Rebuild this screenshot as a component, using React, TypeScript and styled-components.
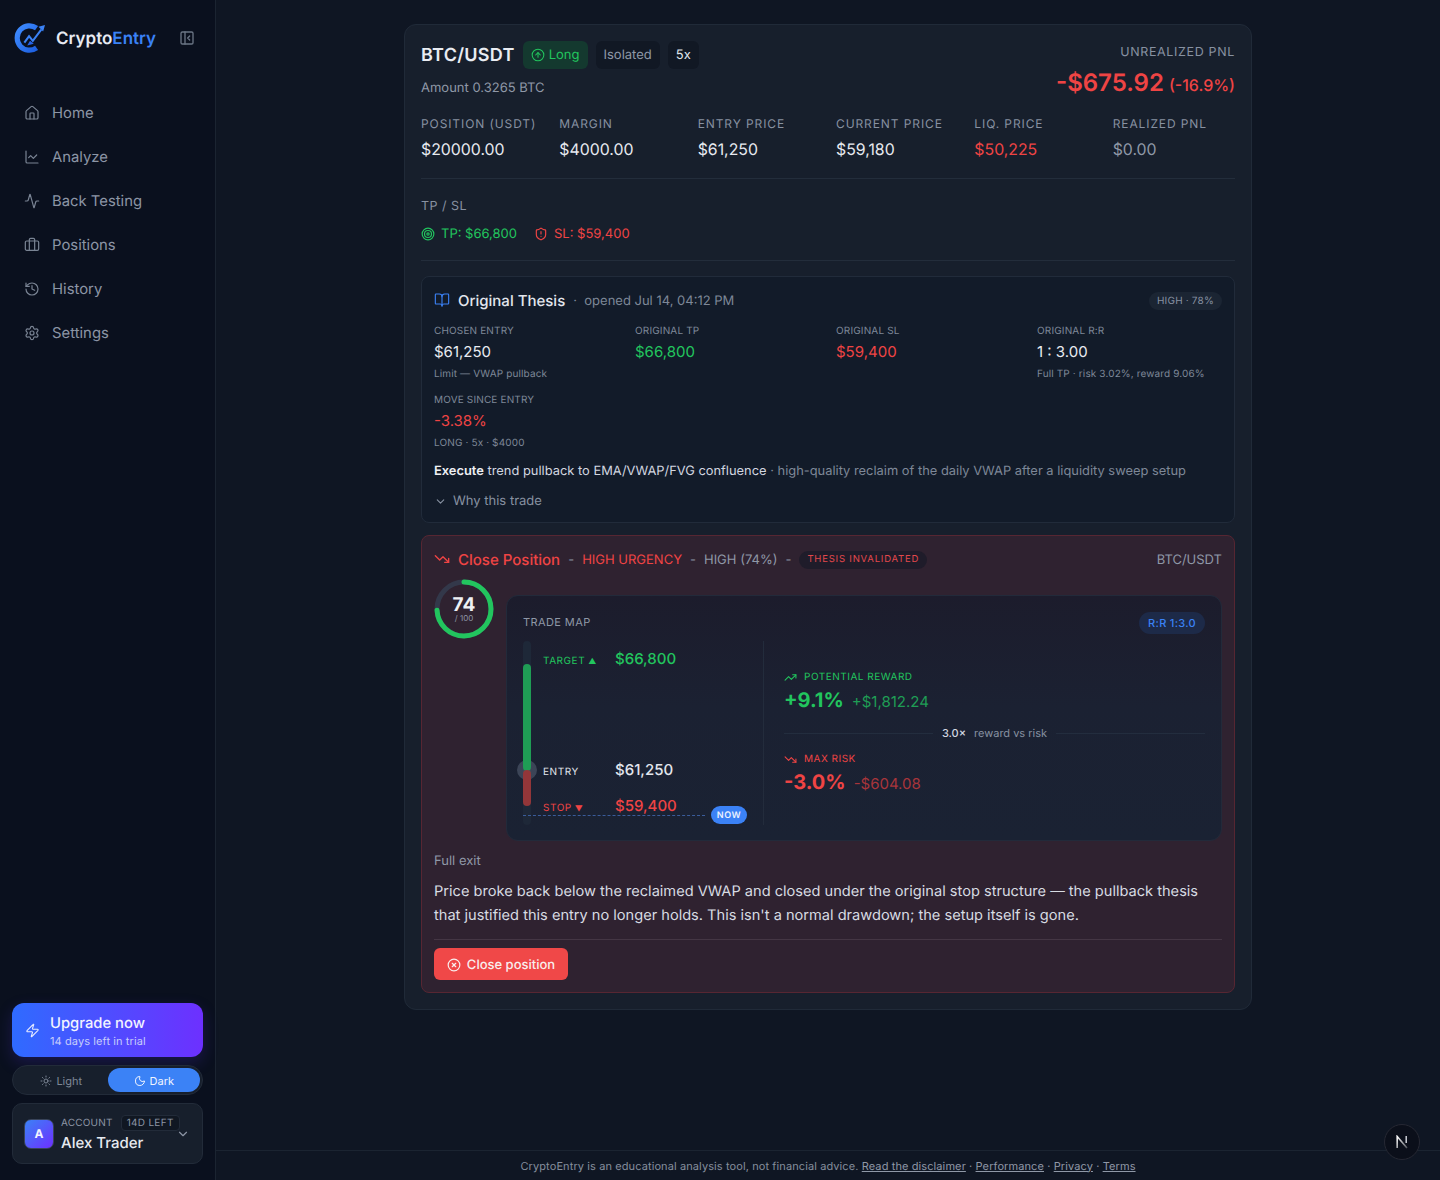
import React from 'react';
import styled, { createGlobalStyle } from 'styled-components';
import {
  House, ChartLine, Activity, Briefcase, History, Settings, PanelLeftClose,
  TrendingDown, TrendingUp, CircleArrowUp, Target, ShieldAlert, BookOpen, ChevronDown,
  Zap, Sun, Moon, CircleX,
} from 'lucide-react';

const Global = createGlobalStyle`
  * { box-sizing: border-box; }
  html, body { margin: 0; height: 1180px; overflow: hidden; background: #0f1623; }
  body { font-family: Inter, "Liberation Sans", sans-serif; color: #e7eaf0; text-rendering: geometricPrecision; }
`;

const Shell = styled.div`display: flex; width: 1440px; height: 1180px;`;

const Sidebar = styled.aside`
  width: 216px; height: 1180px; flex: none; display: flex; flex-direction: column;
  background: #0a101e; border-right: 1px solid #1b2431; padding: 0 12px 16px;
`;
const Brand = styled.div`display: flex; align-items: center; height: 76px; padding-left: 2px;`;
const BrandName = styled.span`
  margin-left: 10px; padding-top: 1px; font-size: 17px; font-weight: 600; color: #e7eaf2;
  b { font-weight: 600; color: #3b82f6; }
`;
const Collapse = styled.span`margin-left: auto; margin-right: 8px; display: flex; color: #6b7585;`;
const Nav = styled.nav`display: flex; flex-direction: column; margin-top: 15px;`;
const NavItem = styled.div`
  height: 44px; display: flex; align-items: center; gap: 12px; padding-left: 12px;
  font-size: 14.85px; color: #8c95a5; svg { color: #7a8494; }
`;
const Spacer = styled.div`flex: 1;`;
const Upgrade = styled.div`
  height: 54px; border-radius: 12px; background: linear-gradient(90deg, #2f6bff, #6d30ff);
  display: flex; align-items: center; gap: 10px; padding-left: 13px; color: #e8ecff;
  box-shadow: 0 6px 16px rgba(88, 50, 230, .22);
`;
const UpgradeText = styled.div`display: flex; flex-direction: column;`;
const UpgradeTitle = styled.span`font-size: 14.8px; font-weight: 500; line-height: 20px; padding-top: 1px; color: #f1f3ff;`;
const UpgradeSub = styled.span`font-size: 11px; line-height: 16px; letter-spacing: .1px; color: #c6cdfb;`;
const Toggle = styled.div`
  margin-top: 8px; height: 30px; border-radius: 15px; background: #171f2c; border: 1px solid #222b39;
  display: grid; grid-template-columns: 1fr 1fr; padding: 2px;
`;
const ToggleOpt = styled.div<{ $on?: boolean }>`
  display: flex; align-items: center; justify-content: center; gap: 4px; font-size: 11px;
  border-radius: 13px; padding-top: 1px; background: ${p => (p.$on ? '#3b82f6' : 'transparent')};
  color: ${p => (p.$on ? '#f0f5ff' : '#7d8796')};
`;
const Account = styled.div`
  margin-top: 8px; height: 61px; border-radius: 10px; background: #171f2c; border: 1px solid #222b39;
  display: flex; align-items: center; padding: 0 12px 0 11px; gap: 7px;
`;
const Avatar = styled.div`
  width: 30px; height: 30px; flex: none; border-radius: 7px; background: linear-gradient(135deg, #3b82f6, #6d30ff);
  border: 1px solid #39445a; display: flex; align-items: center; justify-content: center;
  font-size: 12px; font-weight: 700; color: #f2f4ff;
`;
const AccountBody = styled.div`flex: 1; min-width: 0; display: flex; flex-direction: column; gap: 2px;`;
const AccountTop = styled.div`display: flex; align-items: center; gap: 8px;`;
const AccountLabel = styled.span`font-size: 10px; letter-spacing: .2px; color: #8c95a5; white-space: nowrap;`;
const AccountTag = styled.span`
  flex: none; font-size: 10px; letter-spacing: .3px; color: #8c95a5; padding: 0 5px; line-height: 14px; white-space: nowrap;
  background: #101722; border: 1px solid #222b39; border-radius: 4px;
`;
const AccountName = styled.span`font-size: 15px; font-weight: 500; line-height: 20px; color: #e7eaf0;`;
const AccountChevron = styled.span`flex: none; display: flex; color: #8c95a5; margin-left: -1px;`;

const Main = styled.main`flex: 1; min-width: 0; display: flex; flex-direction: column; position: relative;`;
const Content = styled.div`flex: 1; padding-top: 24px; display: flex; justify-content: center;`;
const Footer = styled.footer`
  height: 30px; border-top: 1px solid #1b2431; display: flex; align-items: center; justify-content: center;
  font-size: 11px; color: #858e9d; letter-spacing: .1px; white-space: pre;
  a { color: #8f98a7; text-decoration: underline; }
`;
const DevBadge = styled.div`
  position: absolute; right: 20px; bottom: 20px; width: 36px; height: 36px; border-radius: 50%;
  background: #0b0f1a; border: 1px solid #262833; display: flex; align-items: center; justify-content: center;
`;

const Card = styled.section`
  width: 848px; height: 986px; background: #171f2c; border: 1px solid #202a38; border-radius: 12px;
  padding: 16px;
`;
const Head = styled.div`display: flex; justify-content: space-between; height: 59px;`;
const HeadLeft = styled.div`display: flex; flex-direction: column;`;
const TitleRow = styled.div`display: flex; align-items: center; gap: 8px; height: 28px;`;
const Pair = styled.h1`margin: 0; font-size: 18px; font-weight: 600; letter-spacing: .27px; color: #e9ecf2;`;
const Badge = styled.span<{ $tone?: 'long' | 'muted' | 'plain' }>`
  height: 28px; display: inline-flex; align-items: center; gap: 4px; padding: 0 8px; border-radius: 6px;
  font-size: 13px;
  background: ${p => (p.$tone === 'long' ? '#14392f' : '#111824')};
  color: ${p => (p.$tone === 'long' ? '#22c55e' : p.$tone === 'plain' ? '#dfe3ea' : '#8f98a7')};
`;
const Amount = styled.div`margin-top: 10px; font-size: 13px; line-height: 18px; color: #8f98a7;`;
const HeadRight = styled.div`text-align: right;`;
const PnlLabel = styled.div`font-size: 12.5px; letter-spacing: .65px; line-height: 20px; color: #8791a1; margin-top: 2px;`;
const Pnl = styled.div`
  margin-top: 4px; font-size: 24px; line-height: 32px; font-weight: 600; color: #ef4444;
  span { font-size: 16px; font-weight: 500; margin-left: 5px; }
`;
const Stats = styled.div`
  margin-top: 15px; display: grid; grid-template-columns: repeat(6, 1fr); gap: 16px;
  padding-bottom: 16px; border-bottom: 1px solid #232d3b;
`;
const StatLabel = styled.div`font-size: 12px; letter-spacing: .9px; line-height: 18px; color: #8791a1; white-space: nowrap;`;
const StatValue = styled.div<{ $c?: string }>`margin-top: 5px; font-size: 15.85px; line-height: 24px; color: ${p => p.$c || '#e7eaf0'};`;
const TpSl = styled.div`padding: 18px 0 0; border-bottom: 1px solid #232d3b; height: 82px;`;
const TpLabel = styled.div`font-size: 12.5px; letter-spacing: .5px; line-height: 20px; color: #8791a1;`;
const TpRow = styled.div`margin-top: 7px; display: flex; gap: 17px; height: 20px;`;
const TpItem = styled.span<{ $c: string }>`display: inline-flex; align-items: center; gap: 6px; font-size: 13px; color: ${p => p.$c};`;

const Thesis = styled.div`
  margin-top: 15px; height: 247px; border: 1px solid #212b3a; border-radius: 8px; background: #121b29; padding: 12px;
`;
const ThesisHead = styled.div`display: flex; align-items: center; height: 22px; margin-bottom: 12px;`;
const ThesisTitle = styled.span`margin-left: 8px; font-size: 15px; font-weight: 500; color: #e2e6ed;`;
const ThesisMeta = styled.span`margin-left: 8px; padding-top: 2px; font-size: 13px; color: #7e8898; white-space: pre;`;
const Conf = styled.span`
  margin-left: auto; margin-top: 2px; font-size: 10px; line-height: 18px; padding: 0 8px; border-radius: 9px;
  background: #1b2533; color: #8791a1; letter-spacing: .2px;
`;
const ThesisGrid = styled.div`display: grid; grid-template-columns: repeat(4, 1fr); column-gap: 16px; row-gap: 10px;`;
const TLabel = styled.div`font-size: 10px; letter-spacing: .15px; line-height: 16px; color: #7e8898;`;
const TValue = styled.div<{ $c?: string }>`margin-top: 2px; font-size: 15px; line-height: 22px; color: ${p => p.$c || '#e7eaf0'};`;
const TSub = styled.div`margin-top: 3px; font-size: 10px; line-height: 16px; color: #7e8898; letter-spacing: .13px;`;
const ThesisCopy = styled.p`
  margin: 11px 0 0; font-size: 12.88px; line-height: 20px; color: #d2d7e0;
  b { font-weight: 600; color: #eef0f4; }
  span { color: #7e8898; }
`;
const Why = styled.div`margin-top: 9px; display: flex; align-items: center; gap: 6px; font-size: 13px; line-height: 20px; color: #8791a1;`;

const Close = styled.div`
  margin-top: 12px; height: 458px; border: 1px solid #572632; border-radius: 8px; background: #2f2230; padding: 12px;
`;
const CloseHead = styled.div`display: flex; align-items: center; height: 22px; font-size: 13px; white-space: nowrap;`;
const CloseTitle = styled.span`margin-left: 8px; font-size: 15px; font-weight: 500; color: #ef4444;`;
const Dash = styled.span`margin: 0 8px; padding-top: 2px; color: #8791a1;`;
const Urgency = styled.span`padding-top: 2px; color: #ef4444;`;
const Muted = styled.span`padding-top: 2px; color: #8f98a7;`;
const Invalid = styled.span`
  margin-top: 2px; font-size: 9.5px; letter-spacing: .8px; line-height: 18px; padding: 0 8px; border-radius: 9px;
  background: #1f1c2a; color: #e2484c;
`;
const CloseAsset = styled.span`margin-left: auto; padding-top: 2px; color: #8f98a7;`;
const CloseBody = styled.div`display: flex; gap: 12px; margin-top: 9px; height: 272px;`;
const Ring = styled.div`position: relative; width: 60px; height: 60px; flex: none;`;
const RingText = styled.div`
  position: absolute; inset: 0; display: flex; flex-direction: column; align-items: center; justify-content: center;
`;
const RingNum = styled.span`font-size: 19px; line-height: 16px; margin-top: 2px; font-weight: 700; color: #eef0f4;`;
const RingSub = styled.span`font-size: 8px; line-height: 10px; color: #8f98a7;`;
const MapBox = styled.div`
  margin-top: 16px; height: 246px; flex: 1; border-radius: 12px; border: 1px solid #222a3a;
  background: linear-gradient(180deg, #1c1c2c 0%, #1b2132 45%, #1a2233 100%); padding: 16px;
`;
const MapHead = styled.div`display: flex; justify-content: space-between; align-items: flex-start; height: 29px;`;
const MapTitle = styled.span`font-size: 11px; letter-spacing: .4px; line-height: 20px; color: #8f98a7;`;
const RR = styled.span`
  font-size: 11px; line-height: 22px; font-weight: 500; letter-spacing: .3px; padding: 0 9px; border-radius: 11px;
  background: #1d2a48; color: #3b82f6;
`;
const MapCols = styled.div`display: flex; height: 184px;`;
const Ladder = styled.div`position: relative; width: 241px; flex: none; border-right: 1px solid #232c3c;`;
const Rail = styled.div`position: absolute; left: 0; top: 0; width: 8px; height: 184px; border-radius: 4px; background: #1e2838;`;
const RailSeg = styled.div<{ $top: number; $h: number; $c: string }>`
  position: absolute; left: 0; width: 8px; top: ${p => p.$top}px; height: ${p => p.$h}px; border-radius: 4px; background: ${p => p.$c};
`;
const EntryDot = styled.div`
  position: absolute; left: -6px; top: 119px; width: 20px; height: 20px; border-radius: 50%;
  background: rgba(148, 163, 184, .28);
`;
const LevelLabel = styled.span<{ $top: number; $c: string }>`
  position: absolute; left: 20px; top: ${p => p.$top}px; font-size: 10px; letter-spacing: .55px; line-height: 14px; color: ${p => p.$c}; white-space: nowrap;
  i { font-style: normal; font-size: 8px; margin-left: 3px; letter-spacing: 0; }
`;
const LevelValue = styled.span<{ $top: number; $c: string }>`
  position: absolute; left: 92px; top: ${p => p.$top}px; font-size: 15px; font-weight: 500; line-height: 20px; color: ${p => p.$c};
`;
const NowLine = styled.div`position: absolute; left: 0; top: 174px; width: 182px; border-top: 1px dashed #3a5c9a;`;
const NowPill = styled.span`
  position: absolute; left: 188px; top: 165px; width: 36px; height: 18px; border-radius: 9px; background: #3b82f6;
  font-size: 9px; font-weight: 600; letter-spacing: .6px; color: #eaf1ff; display: flex; align-items: center; justify-content: center;
`;
const Outcomes = styled.div`flex: 1; padding: 29px 0 0 20px; display: flex; flex-direction: column;`;
const OutHead = styled.div<{ $c: string }>`display: flex; align-items: center; gap: 7px; font-size: 10px; letter-spacing: .5px; line-height: 14px; color: ${p => p.$c};`;
const OutRow = styled.div`display: flex; align-items: baseline; gap: 8px; margin-top: 2px;`;
const OutPct = styled.span<{ $c: string }>`font-size: 20px; font-weight: 700; line-height: 28px; color: ${p => p.$c};`;
const OutAmt = styled.span<{ $c: string }>`font-size: 15px; line-height: 28px; color: ${p => p.$c};`;
const RatioLine = styled.div`
  display: flex; align-items: center; gap: 9px; margin: 10px 0 12px; height: 14px; font-size: 11px; color: #8791a1; white-space: nowrap;
  &::before, &::after { content: ''; flex: 1; border-top: 1px solid #232d3e; }
  b { font-weight: 500; color: #d2d7e0; margin-right: -1px; }
`;
const FullExit = styled.div`margin-top: 0; font-size: 13px; line-height: 20px; color: #8f98a7;`;
const Reason = styled.p`margin: 8px 0 0; font-size: 14.6px; line-height: 24px; color: #d8dce3;`;
const Foot = styled.div`margin-top: 12px; padding-top: 8px; border-top: 1px solid #443644;`;
const CloseBtn = styled.button`
  height: 32px; width: 134px; border: 0; border-radius: 6px; background: #f04848; color: #f9eeee; padding: 1px 0 0;
  display: flex; align-items: center; justify-content: center; gap: 6px; font: 500 13px Inter, sans-serif;
  text-rendering: geometricPrecision;
`;

const Logo = () => (
  <svg width="32" height="30" viewBox="0 0 34 32" fill="none">
    <defs>
      <linearGradient id="lg" x1="0" y1="0" x2="1" y2="1">
        <stop offset="0" stopColor="#3f8cff" />
        <stop offset="1" stopColor="#1d5fe0" />
      </linearGradient>
    </defs>
    <path d="M24 5.5A13 13 0 1 0 24 26.5" stroke="url(#lg)" strokeWidth="5.5" fill="none" />
    <path d="M11 21l5-7 4 5 9-12" stroke="#3b82f6" strokeWidth="2.2" fill="none" />
    <path d="M33 2l-7 2 5 5z" fill="#3b82f6" />
    <path d="M14 24l3-5 4 3z" fill="#2563eb" />
  </svg>
);

const NextMark = () => (
  <svg width="14" height="14" viewBox="0 0 14 14" fill="none">
    <defs>
      <linearGradient id="nx" x1="0" y1="0" x2="1" y2="1">
        <stop offset="0" stopColor="#fff" />
        <stop offset="1" stopColor="#fff" stopOpacity=".3" />
      </linearGradient>
    </defs>
    <path d="M2.2 13V1.5L12 13" stroke="url(#nx)" strokeWidth="1.6" />
    <path d="M11.2 1v7" stroke="#d8dbe2" strokeWidth="1.4" />
  </svg>
);

const nav: [React.ComponentType<any>, string][] = [
  [House, 'Home'], [ChartLine, 'Analyze'], [Activity, 'Back Testing'],
  [Briefcase, 'Positions'], [History, 'History'], [Settings, 'Settings'],
];
const stats: [string, string, string?][] = [
  ['POSITION (USDT)', '$20000.00'], ['MARGIN', '$4000.00'], ['ENTRY PRICE', '$61,250'],
  ['CURRENT PRICE', '$59,180'], ['LIQ. PRICE', '$50,225', '#ef4444'], ['REALIZED PNL', '$0.00', '#8f98a7'],
];
const GREEN = '#22c55e';
const RED = '#ef4444';

export default function App() {
  return (
    <Shell>
      <Global />
      <Sidebar>
        <Brand>
          <Logo />
          <BrandName>Crypto<b>Entry</b></BrandName>
          <Collapse><PanelLeftClose size={16} /></Collapse>
        </Brand>
        <Nav>
          {nav.map(([I, t]) => (
            <NavItem key={t}><I size={16} strokeWidth={1.8} />{t}</NavItem>
          ))}
        </Nav>
        <Spacer />
        <Upgrade>
          <Zap size={15} strokeWidth={1.8} />
          <UpgradeText>
            <UpgradeTitle>Upgrade now</UpgradeTitle>
            <UpgradeSub>14 days left in trial</UpgradeSub>
          </UpgradeText>
        </Upgrade>
        <Toggle>
          <ToggleOpt><Sun size={12} />Light</ToggleOpt>
          <ToggleOpt $on><Moon size={12} />Dark</ToggleOpt>
        </Toggle>
        <Account>
          <Avatar>A</Avatar>
          <AccountBody>
            <AccountTop>
              <AccountLabel>ACCOUNT</AccountLabel>
              <AccountTag>14D LEFT</AccountTag>
            </AccountTop>
            <AccountName>Alex Trader</AccountName>
          </AccountBody>
          <AccountChevron><ChevronDown size={14} /></AccountChevron>
        </Account>
      </Sidebar>

      <Main>
        <Content>
          <Card>
            <Head>
              <HeadLeft>
                <TitleRow>
                  <Pair>BTC/USDT</Pair>
                  <Badge $tone="long"><CircleArrowUp size={14} strokeWidth={1.8} />Long</Badge>
                  <Badge>Isolated</Badge>
                  <Badge $tone="plain">5x</Badge>
                </TitleRow>
                <Amount>Amount 0.3265 BTC</Amount>
              </HeadLeft>
              <HeadRight>
                <PnlLabel>UNREALIZED PNL</PnlLabel>
                <Pnl>-$675.92<span>(-16.9%)</span></Pnl>
              </HeadRight>
            </Head>
            <Stats>
              {stats.map(([l, v, c]) => (
                <div key={l}>
                  <StatLabel>{l}</StatLabel>
                  <StatValue $c={c}>{v}</StatValue>
                </div>
              ))}
            </Stats>
            <TpSl>
              <TpLabel>TP / SL</TpLabel>
              <TpRow>
                <TpItem $c={GREEN}><Target size={14} />TP: $66,800</TpItem>
                <TpItem $c={RED}><ShieldAlert size={14} />SL: $59,400</TpItem>
              </TpRow>
            </TpSl>

            <Thesis>
              <ThesisHead>
                <BookOpen size={16} color="#3b82f6" strokeWidth={1.7} />
                <ThesisTitle>Original Thesis</ThesisTitle>
                <ThesisMeta>·  opened Jul 14, 04:12 PM</ThesisMeta>
                <Conf>HIGH · 78%</Conf>
              </ThesisHead>
              <ThesisGrid>
                <div><TLabel>CHOSEN ENTRY</TLabel><TValue>$61,250</TValue><TSub>Limit — VWAP pullback</TSub></div>
                <div><TLabel>ORIGINAL TP</TLabel><TValue $c={GREEN}>$66,800</TValue></div>
                <div><TLabel>ORIGINAL SL</TLabel><TValue $c={RED}>$59,400</TValue></div>
                <div><TLabel>ORIGINAL R:R</TLabel><TValue>1 : 3.00</TValue><TSub>Full TP · risk 3.02%, reward 9.06%</TSub></div>
                <div><TLabel>MOVE SINCE ENTRY</TLabel><TValue $c={RED}>-3.38%</TValue><TSub>LONG · 5x · $4000</TSub></div>
              </ThesisGrid>
              <ThesisCopy>
                <b>Execute</b> trend pullback to EMA/VWAP/FVG confluence <span>· high-quality reclaim of the daily VWAP after a liquidity sweep setup</span>
              </ThesisCopy>
              <Why><ChevronDown size={13} />Why this trade</Why>
            </Thesis>

            <Close>
              <CloseHead>
                <TrendingDown size={16} color={RED} />
                <CloseTitle>Close Position</CloseTitle>
                <Dash>-</Dash>
                <Urgency>HIGH URGENCY</Urgency>
                <Dash>-</Dash>
                <Muted>HIGH (74%)</Muted>
                <Dash>-</Dash>
                <Invalid>THESIS INVALIDATED</Invalid>
                <CloseAsset>BTC/USDT</CloseAsset>
              </CloseHead>
              <CloseBody>
                <Ring>
                  <svg width="60" height="60" viewBox="0 0 60 60" fill="none">
                    <circle cx="30" cy="30" r="27" stroke="#33384a" strokeWidth="5" />
                    <circle cx="30" cy="30" r="27" stroke={GREEN} strokeWidth="5" strokeLinecap="round"
                      strokeDasharray={`${2 * Math.PI * 27 * 0.74} ${2 * Math.PI * 27}`}
                      transform="rotate(-90 30 30)" />
                  </svg>
                  <RingText>
                    <RingNum>74</RingNum>
                    <RingSub>/ 100</RingSub>
                  </RingText>
                </Ring>
                <MapBox>
                  <MapHead>
                    <MapTitle>TRADE MAP</MapTitle>
                    <RR>R:R 1:3.0</RR>
                  </MapHead>
                  <MapCols>
                    <Ladder>
                      <Rail />
                      <EntryDot />
                      <RailSeg $top={23} $h={107} $c="#1f9d55" />
                      <RailSeg $top={129} $h={36} $c="#933639" />
                      <LevelLabel $top={13} $c={GREEN}>TARGET<i>▲</i></LevelLabel>
                      <LevelValue $top={8} $c={GREEN}>$66,800</LevelValue>
                      <LevelLabel $top={124} $c="#e2e6ed">ENTRY</LevelLabel>
                      <LevelValue $top={119} $c="#e2e6ed">$61,250</LevelValue>
                      <LevelLabel $top={160} $c={RED}>STOP<i>▼</i></LevelLabel>
                      <LevelValue $top={155} $c={RED}>$59,400</LevelValue>
                      <NowLine />
                      <NowPill>NOW</NowPill>
                    </Ladder>
                    <Outcomes>
                      <OutHead $c={GREEN}><TrendingUp size={13} />POTENTIAL REWARD</OutHead>
                      <OutRow>
                        <OutPct $c={GREEN}>+9.1%</OutPct>
                        <OutAmt $c="#1f9d55">+$1,812.24</OutAmt>
                      </OutRow>
                      <RatioLine><b>3.0×</b>reward vs risk</RatioLine>
                      <OutHead $c={RED}><TrendingDown size={13} />MAX RISK</OutHead>
                      <OutRow>
                        <OutPct $c={RED}>-3.0%</OutPct>
                        <OutAmt $c="#a8353b">-$604.08</OutAmt>
                      </OutRow>
                    </Outcomes>
                  </MapCols>
                </MapBox>
              </CloseBody>
              <FullExit>Full exit</FullExit>
              <Reason>
                Price broke back below the reclaimed VWAP and closed under the original stop structure — the pullback thesis that justified this entry no longer holds. This isn't a normal drawdown; the setup itself is gone.
              </Reason>
              <Foot>
                <CloseBtn><CircleX size={14} />Close position</CloseBtn>
              </Foot>
            </Close>
          </Card>
        </Content>
        <Footer>
          CryptoEntry is an educational analysis tool, not financial advice. <a>Read the disclaimer</a> · <a>Performance</a> · <a>Privacy</a> · <a>Terms</a>
        </Footer>
        <DevBadge><NextMark /></DevBadge>
      </Main>
    </Shell>
  );
}
